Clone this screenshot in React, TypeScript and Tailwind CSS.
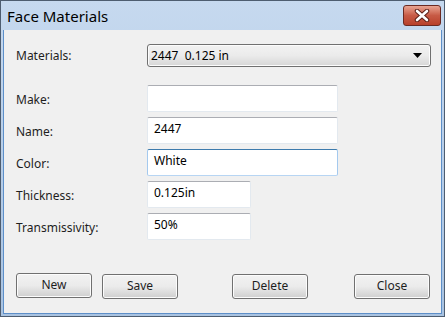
import type { ReactNode } from "react"

const font = { fontFamily: '"Segoe UI", "Noto Sans", "Open Sans", sans-serif' }

function Field({ label, value, wide = true, focused = false }: { label: string; value: string; wide?: boolean; focused?: boolean }) {
  return (
    <div className="flex items-center h-[27px]">
      <div className="w-[131px] text-[12px] text-[#1e1e1e] pt-[2px]">{label}</div>
      <div
        className={`h-[27px] bg-white rounded-[2px] px-[6px] pt-[2px] text-[12px] text-black leading-[18px] border-l border-r border-b border-t ${
          wide ? "w-[191px]" : "w-[104px]"
        } ${
          focused
            ? "border-l-[#a4c9ee] border-r-[#a4c9ee] border-b-[#b7d5f3] border-t-[#3d7bad]"
            : "border-l-[#e3e9ef] border-r-[#e3e9ef] border-b-[#e3e9ef] border-t-[#abadb3]"
        }`}
      >
        {value}
      </div>
    </div>
  )
}

function Btn({ children }: { children: ReactNode }) {
  return (
    <button className="w-[76px] h-[25px] rounded-[3px] border border-[#707070] bg-gradient-to-b from-[#f2f2f2] via-[#ebebeb] to-[#cfcfcf] shadow-[inset_0_0_0_1px_#fcfcfc] text-[12px] text-[#1e1e1e]">
      {children}
    </button>
  )
}

export default function App() {
  return (
    <div className="w-[445px] h-[317px] bg-[#f0f0f0]" style={font}>
      <div className="w-full h-full flex flex-col border border-[#4e5d70] bg-gradient-to-b from-[#c6d9ef] to-[#a9c3e1]">
        {/* title bar */}
        <div className="h-[29px] flex items-start justify-between pl-[6px] pr-[3px]">
          <span className="text-[15px] text-black leading-[20px] pt-[5px]">Face Materials</span>
          <div className="mt-[4px] w-[38px] h-[21px] rounded-[3px] border border-[#6b2a22] bg-gradient-to-b from-[#e8a492] via-[#c75a45] to-[#b8402a] flex items-center justify-center">
            <svg width="16" height="13" viewBox="0 0 16 13">
              <path d="M3 2 L13 11 M13 2 L3 11" stroke="#5a1e16" strokeWidth="4.5" strokeLinecap="round" />
              <path d="M3 2 L13 11 M13 2 L3 11" stroke="#ffffff" strokeWidth="2.6" strokeLinecap="round" />
            </svg>
          </div>
        </div>
        {/* body */}
        <div className="flex-1 mx-[2px] mb-[2px] bg-[#f0f0f0] border-l border-r border-b border-[#5d8fc9] pl-[12px] pr-[10px] flex flex-col">
          <div className="flex items-center mt-[14px] h-[23px]">
            <div className="w-[131px] text-[12px] text-[#1e1e1e]">Materials:</div>
            <div className="flex-1 h-[23px] rounded-[3px] border border-[#707070] bg-gradient-to-b from-[#f2f2f2] via-[#ebebeb] to-[#d6d6d6] shadow-[inset_0_0_0_1px_#fcfcfc] flex items-center justify-between pl-[3px] pr-[8px]">
              <span className="text-[12px] text-black whitespace-pre">2447  0.125 in</span>
              <svg width="9" height="5" viewBox="0 0 9 5">
                <path d="M0 0 H9 L4.5 5 Z" fill="#000" />
              </svg>
            </div>
          </div>
          <div className="flex flex-col gap-[5px] mt-[18px]">
            <Field label="Make:" value="" />
            <Field label="Name:" value="2447" />
            <Field label="Color:" value="White" focused />
            <Field label="Thickness:" value="0.125in" wide={false} />
            <Field label="Transmissivity:" value="50%" wide={false} />
          </div>
          <div className="flex items-center mt-[32px]">
            <Btn>New</Btn>
            <div className="ml-[10px]">
              <Btn>Save</Btn>
            </div>
            <div className="ml-[54px]">
              <Btn>Delete</Btn>
            </div>
            <div className="ml-[46px]">
              <Btn>Close</Btn>
            </div>
          </div>
        </div>
      </div>
    </div>
  )
}
